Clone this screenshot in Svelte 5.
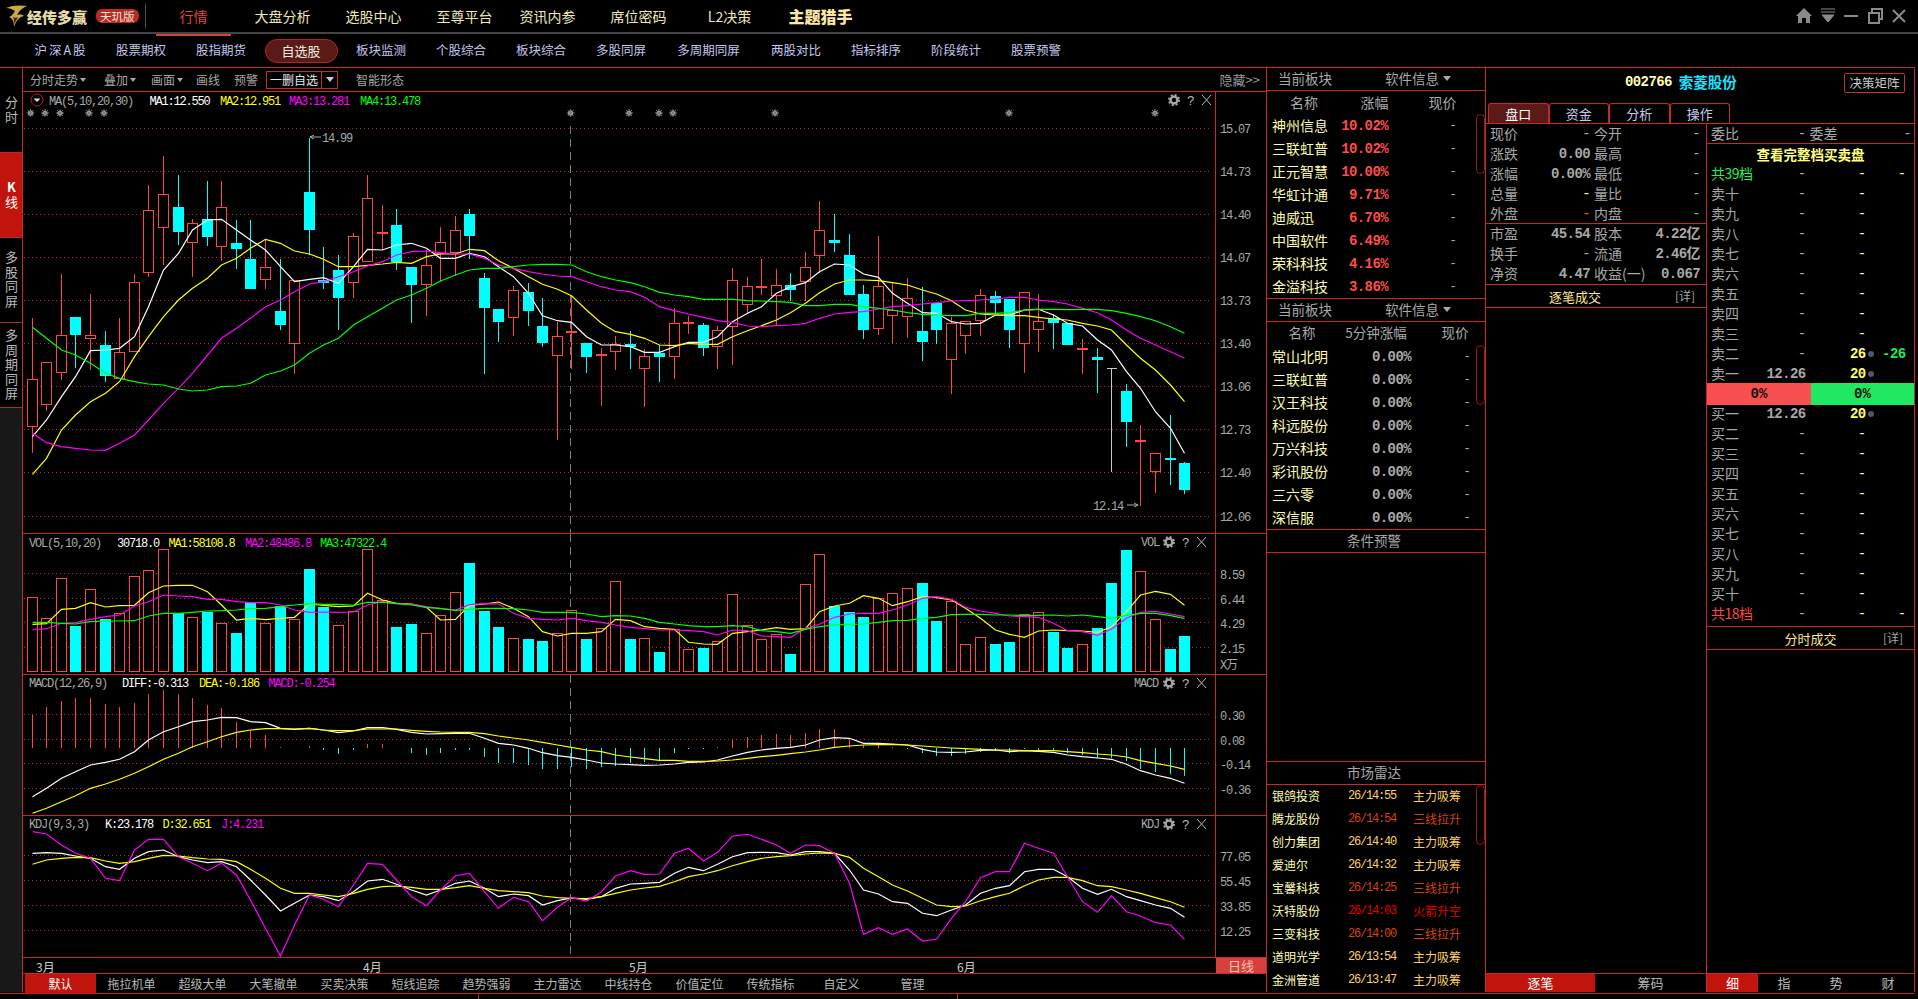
<script>
  // chart data is kept in the same y units the panes were measured in: page y = base + v / 3
  const X = (i) => Math.round(31.6 + 14.59 * i) + 0.5;
  const line = (vals, base) => vals.map((v, i) => `${X(i)},${(base + v / 3).toFixed(1)}`).join(" ");

  const candles = [
    [685,868,1010,1090,"r"],[817,817,943,962,"r"],[553,736,848,870,"r"],[682,682,735,835,"c"],[612,736,746,840,"r"],
    [724,766,858,876,"c"],[685,787,864,864,"r"],[553,577,785,785,"r"],[285,361,548,560,"r"],[198,313,412,525,"r"],
    [255,351,426,465,"c"],[388,400,458,560,"r"],[273,388,441,468,"c"],[273,352,470,512,"r"],[390,460,477,537,"c"],
    [390,507,597,597,"c"],[450,532,569,597,"r"],[507,663,705,720,"c"],[570,571,761,852,"r"],[143,306,420,495,"c"],
    [472,570,578,597,"c"],[495,540,624,720,"c"],[430,439,578,624,"r"],[255,325,513,513,"r"],[345,427,428,480,"r"],
    [357,405,517,540,"c"],[530,531,585,698,"c"],[480,526,584,678,"r"],[411,457,490,575,"r"],[378,421,487,558,"r"],
    [357,372,438,507,"c"],[550,564,654,852,"c"],[657,657,696,755,"c"],[589,601,683,738,"r"],[579,606,663,708,"c"],
    [625,708,759,770,"c"],[696,739,797,1050,"r"],[618,724,725,836,"r"],[758,759,801,849,"c"],[775,793,800,948,"r"],
    [738,763,785,840,"r"],[723,762,771,836,"c"],[778,799,836,950,"r"],[765,790,800,876,"c"],[655,700,800,866,"r"],
    [678,697,698,732,"r"],[700,705,774,798,"c"],[708,720,770,836,"r"],[534,571,710,824,"r"],[560,589,644,672,"r"],
    [507,589,596,615,"r"],[537,587,617,706,"r"],[548,586,600,632,"c"],[487,532,575,632,"r"],[333,421,497,548,"r"],
    [372,450,458,487,"c"],[432,495,615,615,"c"],[585,612,720,747,"c"],[438,589,716,735,"r"],[575,660,676,762,"r"],
    [564,625,680,744,"r"],[592,723,756,812,"c"],[636,639,720,762,"c"],[680,700,808,912,"r"],[695,695,737,792,"r"],
    [597,616,692,738,"r"],[603,618,639,672,"c"],[627,627,720,774,"c"],[607,607,761,850,"r"],[612,694,719,786,"r"],
    [672,684,699,777,"c"],[699,699,765,765,"c"],[747,775,782,852,"r"],[774,801,809,909,"c"],[835,835,836,1146,"g"],
    [882,903,996,1071,"c"],[1005,1051,1057,1248,"r"],[1090,1090,1145,1209,"r"],[975,1104,1106,1185,"c"],[1116,1119,1200,1212,"c"],
  ];

  const ma1 = [1040,990,920,860,782,780,775,740,650,540,490,420,390,388,420,450,480,530,575,568,563,580,530,478,480,465,460,475,505,505,490,500,530,560,610,677,692,697,740,765,765,
    770,787,787,770,757,757,740,695,670,650,610,590,578,545,522,525,552,562,610,640,668,670,695,702,700,675,675,660,658,675,700,708,750,780,845,895,965,1015,1090];
  const ma2 = [1153,1105,1020,975,935,910,875,800,740,680,630,595,565,525,505,475,448,460,483,492,508,530,530,526,522,517,520,500,492,492,478,482,512,535,560,583,598,617,660,700,725,
    733,745,765,767,760,763,763,740,722,707,690,668,640,608,582,570,570,572,578,585,600,612,632,660,672,675,677,677,682,687,690,700,708,720,765,805,840,885,935];
  const ma3 = [1030,1058,1070,1075,1080,1081,1060,1035,990,940,895,850,795,745,715,685,650,630,605,582,575,560,545,528,515,495,485,483,488,492,492,505,525,535,545,552,558,560,575,590,600,
    605,622,650,662,672,682,692,697,708,710,707,705,700,685,672,667,665,657,650,647,642,638,633,632,630,627,622,622,630,635,642,655,668,690,720,745,765,785,805];
  const ma4 = [712,745,780,795,820,850,865,875,882,885,897,903,900,890,888,880,855,843,825,790,765,745,705,680,655,630,615,595,573,555,540,535,535,530,525,523,523,525,545,560,570,
    578,590,607,615,620,628,628,628,632,633,635,637,647,647,643,643,650,655,660,668,673,675,677,677,670,670,668,660,658,658,659,658,658,662,670,680,692,710,730];

  const volBars = [203,265,146,288,178,267,250,139,121,58,250,262,245,280,309,215,280,228,268,117,231,285,245,58,212,291,282,310,257,187,99,243,291,325,327,333,310,241,327,295,155,327,
    325,366,297,358,354,334,193,286,328,313,372,163,73,228,246,261,205,190,175,159,273,214,343,322,342,336,253,247,306,354,343,294,159,60,124,268,357,318];
  const volUp = "rrrcrcrrrrcrcrccrcrccrrrrccrrrcccrccrrcrrcrcrrcrrrrrcrrcccrrrccrrrccrrccrcccrrcc";
  const vol1 = [283,281,238,235,218,231,227,226,188,168,166,166,185,225,270,265,269,265,262,222,226,230,228,190,210,220,222,232,270,268,226,222,216,235,260,305,318,310,310,305,268,272,
    290,295,298,337,342,343,310,305,300,293,298,296,245,228,220,197,205,227,215,200,203,210,235,265,300,313,322,303,300,302,303,307,290,245,195,184,193,226];
  const vol2 = [300,296,280,278,268,260,255,228,215,195,198,200,208,208,215,218,218,225,240,247,246,247,246,225,215,222,222,230,235,240,224,221,222,250,265,268,270,265,272,277,285,292,
    296,300,300,302,305,315,300,302,318,320,322,295,283,262,252,250,250,240,225,205,200,208,232,243,250,258,260,262,280,302,305,316,297,265,247,244,252,260];
  const vol3 = [277,277,280,282,275,273,273,272,258,250,250,247,243,242,240,236,235,230,225,221,223,223,226,217,217,220,225,232,236,241,238,235,235,236,240,247,247,247,252,260,257,258,
    265,277,282,287,290,290,287,290,302,305,310,298,290,285,283,282,277,272,271,265,262,254,253,253,255,255,257,256,255,258,255,260,265,256,250,250,257,265];

  const macdBars = [555,531,513,505,505,522,531,518,492,481,492,505,525,534,575,600,615,652,655,648,660,671,660,643,643,654,668,675,668,660,660,682,700,698,705,716,716,712,716,712,708,700,
    695,690,670,658,658,652,630,622,615,613,615,610,598,598,623,645,645,652,657,670,677,678,673,666,663,668,656,660,663,670,676,683,685,692,717,727,732,738];
  const diff = [800,775,745,725,705,697,688,665,630,605,590,575,570,562,563,575,578,595,598,595,600,608,603,593,593,598,607,612,611,610,610,625,640,645,655,668,677,682,690,699,702,704,
    706,705,702,697,696,690,678,667,660,655,652,645,630,623,625,640,640,642,645,658,666,667,666,661,660,665,662,664,667,675,680,684,688,703,722,735,745,760];
  const dea = [850,835,815,797,775,762,748,730,710,688,670,650,635,620,607,600,596,596,597,595,600,602,602,597,597,597,601,604,606,607,607,611,618,624,630,637,645,652,660,665,675,681,
    686,691,691,694,694,693,690,685,680,676,671,666,660,652,648,645,644,644,645,648,651,654,656,658,660,660,662,662,662,665,668,672,675,681,692,700,708,718];

  const kdjK = [970,968,970,978,985,1010,1018,985,965,960,980,990,998,995,1010,1050,1095,1143,1120,1095,1100,1112,1085,1053,1048,1063,1080,1095,1080,1060,1053,1075,1100,1092,1097,1125,1112,1104,1108,1100,1075,1062,
    1060,1057,1030,1012,1022,1003,980,968,967,968,975,965,965,970,1020,1080,1092,1115,1120,1150,1157,1140,1125,1090,1075,1067,1025,1018,1018,1040,1075,1093,1078,1100,1112,1125,1135,1162];
  const kdjD = [1003,990,985,982,983,993,1000,995,985,976,978,983,987,988,995,1018,1045,1075,1090,1090,1095,1100,1090,1078,1070,1068,1072,1078,1078,1073,1067,1075,1082,1085,1088,1098,1103,1105,1106,1100,1090,1080,
    1074,1069,1055,1040,1032,1022,1007,995,985,980,977,972,969,970,982,1015,1040,1065,1083,1105,1125,1130,1128,1112,1100,1090,1067,1050,1042,1042,1052,1067,1070,1080,1090,1103,1115,1132];
  const kdjJ = [905,912,945,970,985,1045,1052,960,928,928,980,1000,1022,1000,1035,1110,1195,1278,1185,1095,1108,1130,1065,1000,1003,1050,1100,1127,1080,1037,1030,1085,1135,1102,1115,1172,1132,1103,1113,1085,1038,1022,
    1033,1032,970,955,993,967,918,913,928,945,970,945,947,970,1060,1213,1193,1213,1197,1233,1228,1165,1115,1043,1025,1025,940,955,970,1040,1115,1147,1097,1145,1158,1178,1185,1228];

  const stars = [30.6,45,60,89,104,570.6,629,659,673,775,1009,1155];

  const mainGrid = [128.5,171.5,214.5,257.5,300.5,343.5,386.5,429.5,472.5,516.5];
  const mainAxis = ["15.07","14.73","14.40","14.07","13.73","13.40","13.06","12.73","12.40","12.06"];
  const volGrid = [573.5,598.5,622.5,647.5];
  const volAxis = ["8.59","6.44","4.29","2.15"];
  const macdGrid = [714.5,739.5,763.5,788.5];
  const macdAxis = ["0.30","0.08","-0.14","-0.36"];
  const kdjGrid = [855.5,880.5,905.5,930.5];
  const kdjAxis = ["77.05","55.45","33.85","12.25"];

  const nav = ["大盘分析","选股中心","至尊平台","资讯内参","席位密码","L2决策"];
  const sub = ["沪深A股","股票期权","股指期货","自选股","板块监测","个股综合","板块综合","多股同屏","多周期同屏","两股对比","指标排序","阶段统计","股票预警"];
  const tabs = ["默认","拖拉机单","超级大单","大笔撤单","买卖决策","短线追踪","趋势强弱","主力雷达","中线持仓","价值定位","传统指标","自定义","管理"];

  const board1 = [["神州信息","10.02%"],["三联虹普","10.02%"],["正元智慧","10.00%"],["华虹计通","9.71%"],["迪威迅","6.70%"],["中国软件","6.49%"],["荣科科技","4.16%"],["金溢科技","3.86%"]];
  const board2 = ["常山北明","三联虹普","汉王科技","科远股份","万兴科技","彩讯股份","三六零","深信服"];
  const radar = [
    ["银鸽投资","26/14:55","主力吸筹","a"],["腾龙股份","26/14:54","三线拉升","b"],["创力集团","26/14:40","主力吸筹","a"],
    ["爱迪尔","26/14:32","主力吸筹","a"],["宝馨科技","26/14:25","三线拉升","b"],["沃特股份","26/14:03","火箭升空","c"],
    ["三变科技","26/14:00","三线拉升","b"],["道明光学","26/13:54","主力吸筹","a"],["金洲管道","26/13:47","主力吸筹","a"],
  ];

  const quoteA = [
    ["现价","-","今开","-"],["涨跌","0.00","最高","-"],["涨幅","0.00%","最低","-"],
    ["总量","-","量比","-","yl"],["外盘","-","内盘","-","rg"],
  ];
  const quoteB = [["市盈","45.54","股本","4.22亿"],["换手","-","流通","2.46亿"],["净资","4.47","收益(一)","0.067"]];

  const cn = ["十","九","八","七","六","五","四","三","二","一"];
  const sells = cn.map((c) => ({ label: "卖" + c, price: "-", qty: "-" }));
  sells[8] = { label: "卖二", price: "-", qty: "26", dot: true, last: "-26" };
  sells[9] = { label: "卖一", price: "12.26", qty: "20", dot: true };
  const buys = [...cn].reverse().map((c) => ({ label: "买" + c, price: "-", qty: "-" }));
  buys[0] = { label: "买一", price: "12.26", qty: "20", dot: true };
</script>

{#snippet gear(x, y)}
  <g transform="translate({x} {y})">
    <circle r="3.4" fill="none" stroke="#a8a8a8" stroke-width="2.4" />
    <circle r="5" fill="none" stroke="#a8a8a8" stroke-width="2" stroke-dasharray="2 1.93" />
  </g>
{/snippet}

{#snippet tools(x, y)}
  {@render gear(x, y)}
  <text class="tool" x={x + 13} y={y + 5}>?</text>
  <path d="M{x + 28} {y - 5}l9 10M{x + 37} {y - 5}l-9 10" stroke="#b8b8b8" fill="none" />
{/snippet}

{#snippet grid(rows)}
  {#each rows as y}
    <line class="dots" x1="24" x2="1212" y1={y} y2={y} />
  {/each}
{/snippet}

{#snippet axis(labels, rows, dy)}
  {#each labels as label, i}
    <text class="num gray" x="1220" y={rows[i] + dy}>{label}</text>
  {/each}
{/snippet}

{#snippet splitter(y1, y2)}
  <line class="cursor" x1="570.5" x2="570.5" y1={y1} y2={y2} />
  <line class="axisline" x1="1215.5" x2="1215.5" y1={y1 - 40} y2={y2 + 2} />
{/snippet}

<div class="app">
  <header class="top">
    <div class="logo">
      <svg width="24" height="24" viewBox="0 0 24 24">
        <path d="M2 4 C8 1 17 1 23 2 C18 4 15 7 13 11 C17 10 19 11 20 12 C15 13 12 17 10 23 C10 17 8 14 5 13 C8 12 9 10 11 7 C8 5 5 4 2 4Z" fill="#c9a94a" />
        <path d="M9 13 C11 14 13 14 14 13 C13 16 11 18 10 20 C10 17 10 15 9 13Z" fill="#3a2d10" />
      </svg>
      <span class="brand">经传多赢</span>
      <span class="badge">天玑版</span>
    </div>
    <div class="sep"></div>
    <nav class="nav">
      <a class="active">行情</a>
      {#each nav as item, i}
        <a class:shift={i === 3}>{item}</a>
      {/each}
      <a class="hunter">主题猎手</a>
    </nav>
    <div class="win">
      <svg width="116" height="20" viewBox="0 0 116 20">
        <path d="M0 10 L8 2 L16 10 L14 10 L14 17 L10 17 L10 12 L6 12 L6 17 L2 17 L2 10Z" fill="#8a8a8a" />
        <path d="M25 3 H39 M25 6 H39 M26 9 H38 L32 16Z" stroke="#8a8a8a" fill="#8a8a8a" stroke-width="1" />
        <rect x="48" y="9" width="14" height="2" fill="#8a8a8a" />
        <path d="M73 7 h10 v10 h-10z M76 6 V3 h10 v10 h-2" fill="none" stroke="#8a8a8a" stroke-width="2" />
        <path d="M97 4 L109 16 M109 4 L97 16" stroke="#8a8a8a" stroke-width="2" />
      </svg>
    </div>
  </header>

  <nav class="sub">
    {#each sub as item}
      <a class:pill={item === "自选股"} class:wide={item === "多周期同屏"}><span>{item}</span></a>
    {/each}
  </nav>

  <main class="body">
    <aside class="side">
      <div class="vt"><span>分时</span></div>
      <div class="vt on"><span><b>K</b>线</span></div>
      <div class="vt"><span>多股同屏</span></div>
      <div class="vt"><span>多周期同屏</span></div>
      <div class="rest"></div>
    </aside>

    <section class="chart">
      <div class="bar">
        <span class="drop">分时走势</span>
        <span class="drop">叠加</span>
        <span class="drop">画面</span>
        <span class="plain">画线</span>
        <span class="plain">预警</span>
        <span class="delbox"><em>一删自选</em><i></i></span>
        <span class="smart">智能形态</span>
        <span class="hide">隐藏&gt;&gt;</span>
      </div>

      <svg class="pane" width="1243" height="441" viewBox="23 92 1243 441">
        {@render grid(mainGrid)}
        {@render axis(mainAxis, mainGrid, 4)}
        {@render splitter(126, 533)}
        {#each stars as x}
          <g transform="translate({x} 113)">
            <circle r="2.6" fill="#b9b9b9" />
            <path d="M-4 0H4M0 -4V4M-3 -3L3 3M-3 3L3 -3" stroke="#777" />
          </g>
        {/each}
        <g shape-rendering="crispEdges">
          {#each candles as [hi, top, bot, lo, kind], i}
            {@const cx = X(i)}
            {@const y = (v) => 90 + v / 3}
            <line class={kind} x1={cx} x2={cx} y1={y(hi)} y2={y(lo)} />
            {#if kind === "g"}
              <line class="g" x1={cx - 5} x2={cx + 5} y1={y(top)} y2={y(top)} />
            {:else if kind === "c"}
              <rect class="fillc" x={cx - 5.5} y={y(top)} width="11" height={Math.max(y(bot) - y(top), 2)} />
            {:else if bot - top < 8}
              <rect class="fillr" x={cx - 5.5} y={y(top)} width="11" height="2" />
            {:else}
              <rect class="holr" x={cx - 5} y={y(top)} width="10" height={y(bot) - y(top)} />
            {/if}
          {/each}
          <polyline class="lw" points={line(ma1, 90)} />
          <polyline class="ly" points={line(ma2, 90)} />
          <polyline class="lm" points={line(ma3, 90)} />
          <polyline class="lg" points={line(ma4, 90)} />
        </g>
        <path d="M310 137h11m-11 0l4 -2m-4 2l4 2" class="arrow" />
        <text class="num gray" x="322" y="142">14.99</text>
        <path d="M1127 505h11m0 0l-4 -2m4 2l-4 2" class="arrow" />
        <text class="num gray" x="1093" y="510">12.14</text>

        <circle cx="37" cy="100" r="6" fill="none" stroke="#b81c1c" />
        <path d="M33.5 98.5h7l-3.5 3.5z" fill="#ddd" />
        <text class="num gray" x="49" y="105">MA(5,10,20,30)</text>
        <text class="num white" x="149.5" y="105">MA1:12.550</text>
        <text class="num yellow" x="220" y="105">MA2:12.951</text>
        <text class="num magenta" x="289" y="105">MA3:13.281</text>
        <text class="num green" x="360" y="105">MA4:13.478</text>
        {@render tools(1174, 100)}
      </svg>

      <svg class="pane" width="1243" height="140" viewBox="23 534 1243 140">
        {@render grid(volGrid)}
        {@render axis(volAxis, volGrid, 5.5)}
        {@render splitter(534, 674)}
        <text class="num gray" x="1220" y="669">X</text>
        <text class="cjk gray" x="1226" y="669">万</text>
        <g shape-rendering="crispEdges">
          {#each volBars as v, i}
            {@const cx = X(i)}
            {#if volUp[i] === "c"}
              <rect class="fillc" x={cx - 5.5} y={530 + v / 3} width="11" height={141.7 - v / 3} />
            {:else}
              <rect class="holr" x={cx - 5} y={530 + v / 3} width="10" height={141.7 - v / 3} />
            {/if}
          {/each}
          <polyline class="ly" points={line(vol1, 530)} />
          <polyline class="lm" points={line(vol2, 530)} />
          <polyline class="lg" points={line(vol3, 530)} />
        </g>
        <text class="num gray" x="29" y="547">VOL(5,10,20)</text>
        <text class="num white" x="117" y="547">30718.0</text>
        <text class="num yellow" x="168.5" y="547">MA1:58108.8</text>
        <text class="num magenta" x="245" y="547">MA2:48486.8</text>
        <text class="num green" x="320" y="547">MA3:47322.4</text>
        <text class="num gray" x="1141" y="546">VOL</text>
        {@render tools(1169, 542)}
      </svg>

      <svg class="pane" width="1243" height="140" viewBox="23 675 1243 140">
        {@render grid(macdGrid)}
        {@render axis(macdAxis, macdGrid, 5)}
        {@render splitter(675, 815)}
        <g shape-rendering="crispEdges">
          {#each macdBars as v, i}
            <line class={v < 654 ? "r" : "c"} x1={X(i)} x2={X(i)} y1={530 + v / 3} y2={748} />
          {/each}
          <polyline class="lw" points={line(diff, 530)} />
          <polyline class="ly" points={line(dea, 530)} />
        </g>
        <text class="num gray" x="29" y="687">MACD(12,26,9)</text>
        <text class="num white" x="122" y="687">DIFF:-0.313</text>
        <text class="num yellow" x="199" y="687">DEA:-0.186</text>
        <text class="num magenta" x="268.5" y="687">MACD:-0.254</text>
        <text class="num gray" x="1134" y="687">MACD</text>
        {@render tools(1169, 683)}
      </svg>

      <svg class="pane" width="1243" height="141" viewBox="23 816 1243 141">
        {@render grid(kdjGrid)}
        {@render axis(kdjAxis, kdjGrid, 5)}
        {@render splitter(816, 957)}
        <g shape-rendering="crispEdges">
          <polyline class="lw" points={line(kdjK, 530)} />
          <polyline class="ly" points={line(kdjD, 530)} />
          <polyline class="lm" points={line(kdjJ, 530)} />
        </g>
        <text class="num gray" x="29" y="828">KDJ(9,3,3)</text>
        <text class="num white" x="105" y="828">K:23.178</text>
        <text class="num yellow" x="162.5" y="828">D:32.651</text>
        <text class="num magenta" x="221" y="828">J:4.231</text>
        <text class="num gray" x="1141" y="828">KDJ</text>
        {@render tools(1169, 824)}
      </svg>

      <div class="dates">
        <div class="months">
          <span style="left: 13px">3月</span>
          <span style="left: 340px">4月</span>
          <span style="left: 606px">5月</span>
          <span style="left: 934px">6月</span>
        </div>
        <div class="period">日线</div>
      </div>

      <div class="tabs">
        {#each tabs as tab, i}
          <span class:on={i === 0}>{tab}</span>
        {/each}
      </div>
    </section>

    <section class="radar">
      <div class="head"><span>当前板块</span><span class="soft">软件信息<i></i></span></div>
      <div class="board one">
        <div class="cols"><span>名称</span><span>涨幅</span><span>现价</span></div>
        {#each board1 as [name, pct]}
          <div class="row"><span class="name">{name}</span><span class="pct up">{pct}</span><span class="dash">-</span></div>
        {/each}
        <div class="scroll"></div>
      </div>
      <div class="head"><span>当前板块</span><span class="soft">软件信息<i></i></span></div>
      <div class="board two">
        <div class="cols"><span>名称</span><span>5分钟涨幅</span><span>现价</span></div>
        {#each board2 as name}
          <div class="row"><span class="name">{name}</span><span class="pct flat">0.00%</span><span class="dash">-</span></div>
        {/each}
        <div class="scroll"></div>
      </div>
      <div class="center">条件预警</div>
      <div class="blank"></div>
      <div class="center">市场雷达</div>
      <div class="alerts">
        {#each radar as [name, time, act, tone]}
          <div class="alert {tone}"><span class="aname">{name}</span><span class="atime">{time}</span><span>{act}</span></div>
        {/each}
        <div class="scroll"></div>
      </div>
    </section>

    <section class="quote">
      <div class="title">
        <span class="code">002766</span><span class="stock">索菱股份</span>
        <span class="matrix">决策矩阵</span>
      </div>
      <div class="qtabs">
        <span class="on">盘口</span><span>资金</span><span>分析</span><span>操作</span>
      </div>
      <div class="qbody">
        <div class="qleft">
          <div class="qgroup five">
            {#each quoteA as [a, av, b, bv, tone]}
              <div class="qrow">
                <div class="cell"><span>{a}</span><b class:y={tone === "yl"} class:r={tone === "rg"} class:dash2={av === "-"}>{av}</b></div>
                <div class="cell r2"><span>{b}</span><b class:g={tone === "rg"} class:dash2={bv === "-"}>{bv}</b></div>
              </div>
            {/each}
          </div>
          <div class="qgroup three">
            {#each quoteB as [a, av, b, bv]}
              <div class="qrow">
                <div class="cell"><span>{a}</span><b class:dash2={av === "-"}>{av}</b></div>
                <div class="cell r2"><span>{b}</span><b>{bv}</b></div>
              </div>
            {/each}
          </div>
          <div class="deal"><span class="dealname">逐笔成交</span><span class="more">[详]</span></div>
          <div class="blank"></div>
          <div class="btabs left"><span class="on">逐笔</span><span>筹码</span></div>
        </div>
        <div class="qright">
          <div class="webi"><span>委比</span><b class="dash2">-</b><span class="wc">委差</span><b class="dash2 wd">-</b></div>
          <div class="view">查看完整档买卖盘</div>
          <div class="order"><span class="lbl green2">共39档</span><b class="dash2">-</b><b class="dash2 qty">-</b><i></i><b class="dash2 qty">-</b></div>
          {#each sells as o}
            <div class="order">
              <span class="lbl">{o.label}</span>
              <b class:dash2={o.price === "-"}>{o.price}</b>
              <b class="qty" class:dash2={o.qty === "-"}>{o.qty}</b>
              <i class:dot={o.dot}></i>
              <b class="lastv">{o.last ?? ""}</b>
            </div>
          {/each}
          <div class="ratio"><span class="red">0%</span><span class="grn">0%</span></div>
          {#each buys as o}
            <div class="order">
              <span class="lbl">{o.label}</span>
              <b class:dash2={o.price === "-"}>{o.price}</b>
              <b class="qty" class:dash2={o.qty === "-"}>{o.qty}</b>
              <i class:dot={o.dot}></i>
              <b></b>
            </div>
          {/each}
          <div class="order"><span class="lbl red2">共18档</span><b class="dash2">-</b><b class="dash2 qty">-</b><i></i><b class="dash2 qty">-</b></div>
          <div class="deal slim"><span class="dealname">分时成交</span><span class="more">[详]</span></div>
          <div class="blank"></div>
          <div class="btabs right"><span class="on">细</span><span>指</span><span>势</span><span>财</span></div>
        </div>
      </div>
    </section>
  </main>

  <footer class="foot"><i></i><i></i></footer>
</div>

<style>
  :global(body) {
    margin: 0;
    background: #000;
  }

  .app {
    --line: #c42a2a;
    width: 1918px;
    height: 999px;
    overflow: hidden;
    background: #000;
    color: #aaa;
    font-family: "Noto Sans CJK SC", "Liberation Sans", sans-serif;
    font-size: 12px;
    line-height: 1;
  }

  /* top bar */
  .top {
    height: 32px;
    display: flex;
    align-items: center;
    border-bottom: 2px solid #444;
    position: relative;
  }
  .logo {
    width: 145px;
    display: flex;
    align-items: center;
    padding-left: 4px;
    box-sizing: border-box;
  }
  .brand {
    margin-left: -1px;
    font-size: 15px;
    font-weight: 900;
    color: #e4dba8;
  }
  .badge {
    margin-left: 9px;
    background: #b62c24;
    color: #f2e6d8;
    border-radius: 6px;
    padding: 1px 4px;
    font-size: 11.5px;
    line-height: 12px;
    white-space: nowrap;
  }
  .sep {
    width: 1px;
    height: 24px;
    background: #555;
  }
  .nav {
    display: flex;
    margin-left: 10px;
    height: 32px;
  }
  .nav a {
    width: 91px;
    line-height: 32px;
    text-align: center;
    font-size: 14px;
    color: #eee8b8;
    white-space: nowrap;
  }
  .nav a.active {
    width: 75px;
    margin-right: 6px;
    color: #e04444;
    border-bottom: 2px solid #d84040;
    height: 34px;
  }
  .nav a.shift {
    margin-left: -8px;
  }
  .nav a.hunter {
    font-size: 16px;
    font-weight: 900;
    color: #ffe9a0;
  }
  .win {
    margin-left: auto;
    margin-right: 6px;
    height: 20px;
  }

  /* second row */
  .sub {
    height: 33px;
    display: flex;
    padding-left: 21px;
    align-items: center;
    font-size: 12.5px;
    color: #c6c6f0;
  }
  .sub a {
    width: 80px;
    text-align: center;
    white-space: nowrap;
    flex: none;
  }
  .sub a:first-child span {
    letter-spacing: 2px;
  }
  .sub a.wide {
    width: 95px;
  }
  .sub a.pill span {
    display: block;
    width: 73px;
    height: 24px;
    margin: 0 auto;
    box-sizing: border-box;
    line-height: 22px;
    background: #5a1a18;
    border: 1px solid #b52222;
    border-radius: 12px;
    color: #f4efe0;
    font-size: 13px;
  }

  /* main frame */
  .body {
    height: 925px;
    display: grid;
    grid-template-columns: 23px 1244px 219px 429px;
    border-top: 1px solid var(--line);
    border-bottom: 1px solid var(--line);
    box-sizing: content-box;
    width: 1915px;
  }

  .side {
    border-right: 1px solid var(--line);
    display: flex;
    flex-direction: column;
    height: 924px;
    font-size: 13px;
    color: #bbb;
  }
  .vt {
    height: 84px;
    flex: none;
    display: flex;
    align-items: center;
    justify-content: center;
    border-bottom: 1px solid #a83030;
  }
  .vt span {
    writing-mode: vertical-rl;
    text-orientation: upright;
    letter-spacing: 1.5px;
    line-height: 22px;
  }
  .vt.on {
    background: #c0140c;
    color: #fff;
  }
  .rest {
    flex: 1;
    background: #181818;
  }

  .chart {
    border-right: 1px solid var(--line);
    display: flex;
    flex-direction: column;
    height: 924px;
  }
  .bar {
    height: 23px;
    flex: none;
    display: flex;
    align-items: center;
    padding-left: 7px;
    border-bottom: 1px solid var(--line);
    color: #a8a8a8;
    white-space: nowrap;
  }
  .bar .drop {
    display: inline-flex;
    align-items: center;
    width: 47px;
    flex: none;
  }
  .bar .drop:first-child {
    width: 74px;
  }
  .bar .drop:nth-child(3) {
    width: 45px;
  }
  .bar .drop::after {
    content: "";
    margin-left: 2px;
    border: 3.5px solid transparent;
    border-top: 4px solid #a8a8a8;
    border-bottom: 0;
  }
  .bar .plain {
    width: 38px;
    flex: none;
  }
  .bar .plain + .plain {
    width: 32px;
  }
  .delbox {
    display: flex;
    height: 18px;
    width: 72px;
    flex: none;
    box-sizing: border-box;
    border: 1px solid var(--line);
    align-items: center;
    color: #e8e8e8;
    margin-right: 18px;
  }
  .delbox em {
    font-style: normal;
    width: 54px;
    flex: none;
    border-right: 1px solid var(--line);
    height: 16px;
    line-height: 16px;
    text-align: center;
  }
  .delbox i {
    margin-left: 4px;
    border: 4px solid transparent;
    border-top: 5px solid #ccc;
    border-bottom: 0;
  }
  .hide {
    margin-left: auto;
    margin-right: 6px;
    font-size: 13px;
    color: #999;
  }

  .pane {
    display: block;
    flex: none;
    border-bottom: 1px solid var(--line);
    box-sizing: content-box;
  }
  .dots {
    stroke: #b02c2c;
    stroke-dasharray: 1 3;
  }
  .cursor {
    stroke: #6f7f90;
    stroke-dasharray: 8 5;
  }
  .axisline {
    stroke: var(--line);
  }
  .r {
    stroke: #ff4444;
  }
  .c {
    stroke: #00ffff;
  }
  .g {
    stroke: #c8c8c8;
  }
  .fillc {
    fill: #00ffff;
  }
  .fillr {
    fill: #ff4444;
  }
  .holr {
    fill: #000;
    stroke: #ff4444;
  }
  polyline {
    fill: none;
    stroke-width: 1.2;
    shape-rendering: auto;
  }
  .lw {
    stroke: #fff;
  }
  .ly {
    stroke: #ffff00;
  }
  .lm {
    stroke: #ff00ff;
  }
  .lg {
    stroke: #00ff00;
  }
  .arrow {
    stroke: #aaa;
    fill: none;
  }
  .num {
    font-family: "Liberation Mono", monospace;
    font-size: 12px;
    letter-spacing: -1.2px;
  }
  .cjk {
    font-size: 12px;
  }
  .tool {
    font-family: "Liberation Sans", sans-serif;
    font-size: 13px;
    fill: #b8b8b8;
  }
  .gray {
    fill: #a8a8a8;
  }
  .white {
    fill: #fff;
  }
  .yellow {
    fill: #ffff00;
  }
  .magenta {
    fill: #ff00ff;
  }
  .green {
    fill: #00ff00;
  }

  .dates {
    height: 15px;
    flex: none;
    display: flex;
    border-bottom: 1px solid var(--line);
  }
  .months {
    position: relative;
    width: 1193px;
    color: #ccc;
  }
  .months span {
    position: absolute;
    top: 3px;
  }
  .period {
    width: 50px;
    background: #d84040;
    color: #f2c0b0;
    text-align: center;
    font-size: 13px;
    line-height: 15px;
  }
  .tabs {
    flex: 1;
    display: flex;
    padding-left: 2px;
  }
  .tabs span {
    width: 71px;
    flex: none;
    text-align: center;
    line-height: 20px;
    color: #b8b8b8;
  }
  .tabs .on {
    background: #c0140c;
    color: #fff;
  }

  /* middle column */
  .radar {
    height: 924px;
    border-right: 1px solid var(--line);
    display: flex;
    flex-direction: column;
    font-size: 14px;
  }
  .head {
    flex: none;
    display: flex;
    align-items: center;
    padding: 0 0 2px 11px;
    height: 20px;
    font-size: 13.5px;
    line-height: 20px;
    border-bottom: 1px solid var(--line);
    color: #aaa;
  }
  .soft {
    margin-left: 53px;
    display: inline-flex;
    align-items: center;
  }
  .soft i {
    margin-left: 4px;
    border: 4px solid transparent;
    border-top: 5px solid #aaa;
    border-bottom: 0;
  }
  .board {
    position: relative;
    flex: none;
    border-bottom: 1px solid var(--line);
  }
  .cols {
    height: 21px;
    padding-bottom: 2px;
    display: grid;
    align-items: center;
    color: #aaa;
  }
  .one .cols {
    grid-template-columns: 74px 67px 69px;
    justify-items: center;
  }
  .two .cols {
    grid-template-columns: 70px 78px 80px;
    justify-items: center;
    font-size: 13.5px;
  }
  .row {
    height: 23px;
    display: flex;
    align-items: center;
    padding-left: 5px;
    color: #ffffb0;
  }
  .name {
    width: 60px;
    flex: none;
    white-space: nowrap;
    margin-top: -2px;
  }
  .pct {
    font-family: "Liberation Mono", monospace;
    font-weight: 700;
    font-size: 14px;
    letter-spacing: -0.6px;
    text-align: right;
  }
  .one .pct {
    width: 56px;
  }
  .two .pct {
    width: 79px;
  }
  .up {
    color: #ff4c4c;
  }
  .flat {
    color: #aaa;
  }
  .dash {
    color: #aaa;
    text-align: right;
    font-family: "Liberation Mono", monospace;
    font-size: 13px;
  }
  .one .dash {
    width: 69px;
  }
  .two .dash {
    width: 60px;
  }
  .scroll {
    position: absolute;
    right: 0;
    top: 23px;
    width: 9px;
    height: 60px;
    box-sizing: border-box;
    border: 1px solid #a01818;
    border-radius: 5px;
  }
  .center {
    height: 21px;
    padding-bottom: 1px;
    flex: none;
    line-height: 21px;
    text-align: center;
    font-size: 13.5px;
    color: #a8a8a8;
    border-bottom: 1px solid var(--line);
    padding-right: 4px;
  }
  .blank {
    flex: 1;
    border-bottom: 1px solid var(--line);
  }
  .alerts {
    position: relative;
    flex: 1;
    font-size: 12px;
  }
  .alerts .scroll {
    top: 0;
  }
  .alert {
    height: 23px;
    display: flex;
    align-items: center;
    padding-left: 5px;
  }
  .aname {
    width: 76px;
    color: #ffffb0;
  }
  .atime {
    width: 65px;
    font-family: "Liberation Mono", monospace;
    letter-spacing: -1.2px;
  }
  .alert.a span:not(.aname) {
    color: #ffd060;
  }
  .alert.b span:not(.aname) {
    color: #d8420e;
  }
  .alert.c span:not(.aname) {
    color: #e00000;
  }

  /* right column */
  .quote {
    height: 924px;
    border-right: 1px solid var(--line);
    display: flex;
    flex-direction: column;
    font-size: 14px;
  }
  .title {
    height: 35px;
    flex: none;
    position: relative;
    display: flex;
    align-items: center;
    padding-left: 139px;
    padding-bottom: 7px;
    box-sizing: border-box;
  }
  .code {
    font-family: "Liberation Mono", monospace;
    font-weight: 700;
    font-size: 14px;
    letter-spacing: -0.6px;
    color: #ffffb0;
    margin-right: 7px;
  }
  .stock {
    font-size: 14.5px;
    font-weight: 700;
    color: #1fe0ff;
  }
  .matrix {
    position: absolute;
    left: 358px;
    top: 5px;
    width: 61px;
    height: 20px;
    box-sizing: border-box;
    border: 1px solid #c03030;
    border-radius: 2px;
    line-height: 18px;
    text-align: center;
    font-size: 12.5px;
    color: #ccc;
  }
  .qtabs {
    height: 20px;
    flex: none;
    display: flex;
    padding-left: 2px;
    border-bottom: 1px solid var(--line);
  }
  .qtabs span {
    width: 60.5px;
    box-sizing: border-box;
    border: 1px solid var(--line);
    border-bottom: 0;
    border-radius: 3px 3px 0 0;
    text-align: center;
    line-height: 19px;
    font-size: 13px;
    color: #c8c8f0;
  }
  .qtabs .on {
    background: #5a1a18;
    color: #fff;
  }
  .qbody {
    flex: 1;
    display: grid;
    grid-template-columns: 221px 207px;
    min-height: 0;
  }
  .qleft {
    border-right: 1px solid var(--line);
    display: flex;
    flex-direction: column;
    min-height: 0;
  }
  .qgroup {
    flex: none;
    border-bottom: 1px solid var(--line);
  }
  .five {
    height: 99px;
  }
  .three {
    height: 60px;
  }
  .qrow {
    height: 20px;
    display: flex;
    padding-left: 4px;
  }
  .cell {
    width: 100px;
    flex: none;
    display: flex;
    justify-content: space-between;
    align-items: center;
    color: #a8a8a8;
    white-space: nowrap;
  }
  .cell span,
  .lbl,
  .webi span {
    position: relative;
    top: -1px;
  }
  .r2 {
    margin-left: 4px;
    width: 106px;
  }
  .qright b,
  .cell b {
    font-family: "Liberation Mono", "Noto Sans CJK SC", monospace;
    font-size: 14px;
    letter-spacing: -0.6px;
    font-weight: 700;
    color: #a8a8a8;
  }
  .dash2 {
    font-weight: 400 !important;
  }
  .cell b.y {
    color: #ffff66;
  }
  .cell b.r {
    color: #ff4444;
  }
  .cell b.g {
    color: #22e855;
  }
  .deal {
    height: 22px;
    flex: none;
    position: relative;
    display: flex;
    align-items: center;
    justify-content: center;
    border-bottom: 1px solid var(--line);
    color: #ffe98a;
    font-size: 13px;
  }
  .qleft .dealname {
    margin-right: 42px;
  }
  .more {
    position: absolute;
    right: 11px;
    color: #a8a8a8;
    font-family: "Noto Sans CJK SC", sans-serif;
    font-size: 12px;
  }
  .btabs {
    height: 18px;
    flex: none;
    display: grid;
    font-size: 13px;
    line-height: 18px;
    text-align: center;
    color: #b8b8b8;
  }
  .btabs.left {
    grid-template-columns: 109px 111px;
  }
  .btabs.right {
    grid-template-columns: 51px 52px 52px 52px;
  }
  .btabs .on {
    background: #c0140c;
    color: #fff;
  }
  .qright {
    display: flex;
    flex-direction: column;
    min-height: 0;
  }
  .webi {
    height: 19px;
    flex: none;
    display: grid;
    grid-template-columns: 94.5px 1fr auto;
    align-items: center;
    padding: 0 3px 0 4px;
    border-bottom: 1px solid var(--line);
  }
  .webi span:first-child {
    grid-column: 1;
    grid-row: 1;
  }
  .webi b:nth-child(2) {
    grid-column: 1;
    grid-row: 1;
    justify-self: end;
  }
  .webi .wc {
    grid-column: 2;
    margin-left: 4px;
  }
  .view {
    height: 20px;
    flex: none;
    line-height: 20px;
    text-align: center;
    font-weight: 700;
    font-size: 13.5px;
    color: #ffff80;
  }
  .order {
    height: 20px;
    flex: none;
    display: grid;
    grid-template-columns: 40px 54.5px 60px 12px 28px;
    align-items: center;
    padding-left: 4px;
    color: #a8a8a8;
  }
  .order b {
    text-align: right;
  }
  .order b.qty {
    color: #ffff66;
  }
  .order .lastv {
    color: #22e855;
  }
  .order i {
    display: block;
  }
  .order i.dot {
    width: 6px;
    height: 6px;
    border-radius: 50%;
    background: #55556a;
    margin-left: 2px;
  }
  .lbl {
    white-space: nowrap;
  }
  .green2 {
    color: #22f060;
    font-size: 14px;
    letter-spacing: -0.5px;
  }
  .red2 {
    color: #ff4444;
    font-size: 14px;
    letter-spacing: -0.5px;
  }
  .ratio {
    height: 22px;
    flex: none;
    margin: -1px 0 -1px 0;
    display: grid;
    grid-template-columns: 104px 103px;
    font-family: "Liberation Mono", monospace;
    font-weight: 700;
    font-size: 14px;
    line-height: 22px;
    text-align: center;
    color: #111;
    position: relative;
    z-index: 1;
  }
  .ratio .red {
    background: #f85050;
  }
  .ratio .grn {
    background: #20e860;
  }
  .slim {
    border-top: 1px solid var(--line);
    margin-top: 2px;
    color: #ffe98a;
  }
  .slim .dealname {
    margin-right: 0;
  }

  .foot {
    height: 6px;
    position: relative;
  }
  .foot i {
    position: absolute;
    top: 0;
    width: 1px;
    height: 6px;
    background: var(--line);
    left: 478px;
  }
  .foot i + i {
    left: 957px;
  }
</style>
